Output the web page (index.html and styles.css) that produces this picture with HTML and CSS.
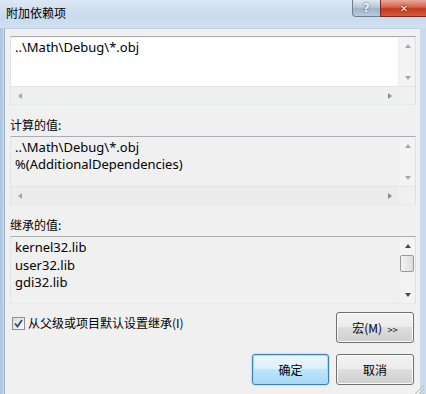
FILE: index.html
```html
<!DOCTYPE html>
<html lang="zh">
<head>
    <meta charset="UTF-8">
    <title>附加依赖项</title>
    <link rel="stylesheet" href="styles.css">
</head>
<body>
<div class="window">
    <div class="titlebar">
        <span class="title">附加依赖项</span>
        <div class="caption">
            <span class="cap-btn help">?</span>
            <span class="cap-btn close">&#x2715;</span>
        </div>
    </div>
    <div class="client">
        <!-- redigerbar liste -->
        <div class="listbox edit">
            <div class="list-main">
                <div class="list-text">..\Math\Debug\*.obj</div>
                <div class="vscroll">
                    <span class="sb-btn"><i class="arr up"></i></span>
                    <span class="sb-track"></span>
                    <span class="sb-btn"><i class="arr down"></i></span>
                </div>
            </div>
            <div class="hscroll">
                <span class="sb-btn"><i class="arr left"></i></span>
                <span class="sb-track"></span>
                <span class="sb-btn"><i class="arr right"></i></span>
                <span class="corner"></span>
            </div>
        </div>

        <div class="label">计算的值:</div>
        <div class="listbox">
            <div class="list-main">
                <div class="list-text">..\Math\Debug\*.obj<br>%(AdditionalDependencies)</div>
                <div class="vscroll">
                    <span class="sb-btn"><i class="arr up"></i></span>
                    <span class="sb-track"></span>
                    <span class="sb-btn"><i class="arr down"></i></span>
                </div>
            </div>
            <div class="hscroll">
                <span class="sb-btn"><i class="arr left"></i></span>
                <span class="sb-track"></span>
                <span class="sb-btn"><i class="arr right"></i></span>
                <span class="corner"></span>
            </div>
        </div>

        <div class="label">继承的值:</div>
        <div class="listbox tall">
            <div class="list-main">
                <div class="list-text">kernel32.lib<br>user32.lib<br>gdi32.lib</div>
                <div class="vscroll active">
                    <span class="sb-btn"><i class="arr up"></i></span>
                    <span class="thumb"></span>
                    <span class="sb-track"></span>
                    <span class="sb-btn"><i class="arr down"></i></span>
                </div>
            </div>
        </div>

        <div class="check-row">
            <label class="check">
                <span class="box">
                    <svg width="9" height="9" viewBox="0 0 9 9"><path d="M1 4.5 L3.5 7.5 L8 1" fill="none" stroke="#2c4a82" stroke-width="1.8"/></svg>
                </span>
                从父级或项目默认设置继承(I)
            </label>
            <button class="btn">宏(M) <small>&gt;&gt;</small></button>
        </div>
        <div class="btn-row">
            <button class="btn default">确定</button>
            <button class="btn">取消</button>
        </div>
        <span class="grip"></span>
    </div>
</div>
</body>
</html>
```
FILE: styles.css
```css
body{
    margin: 0;
    font-family: "Noto Sans", "Noto Sans CJK SC", sans-serif;
    font-size: 12px;
    color: #000;
    background: #c9dbee;
}
.window{
    width: 426px;
    height: 394px;
    display: flex;
    flex-direction: column;
    overflow: hidden;
    background: linear-gradient(90deg, #a9c2de 0, #c6d9ee 4px, #d4e3f3 60%, #c8dbef 100%);
}
.titlebar{
    height: 28px;
    display: flex;
    justify-content: space-between;
    align-items: flex-start;
    background: linear-gradient(180deg, #dbe7f4 0, #c9dbee 60%, #d0e0f1 100%);
}
.title{
    font-family: "Noto Sans CJK SC", sans-serif;
    margin: 4px 0 0 6px;
    line-height: 17px;
}
.caption{
    display: flex;
    margin-right: -2px;
}
.cap-btn{
    height: 17px;
    display: flex;
    align-items: center;
    justify-content: center;
    font-family: "DejaVu Sans", sans-serif;
    font-weight: bold;
    color: #fff;
    border: 1px solid #6d7e92;
    border-top: none;
    box-sizing: border-box;
}
.help{
    width: 28px;
    border-radius: 0 0 0 4px;
    border-right: none;
    font-size: 12px;
    color: #eef3f8;
    text-shadow: 0 0 2px #38506a;
    background: linear-gradient(180deg, #dfe8f1 0, #b7c8da 45%, #9fb3c8 55%, #b9cbdd 100%);
}
.close{
    width: 48px;
    font-size: 10px;
    text-shadow: 0 0 2px #5a1208, 0 0 1px #5a1208;
    border-color: #7a2a20;
    background: linear-gradient(180deg, #e9a99b 0, #d2624b 45%, #c3361d 55%, #d55a3e 100%);
}
.client{
    flex: 1;
    position: relative;
    margin: 0 6px 0 4px;
    padding: 7px 4px 0 5px;
    background: #f0f0f0;
    border-left: 1px solid #9fb3c9;
    border-top: 1px solid #c0d0e2;
    box-sizing: border-box;
}
.listbox{
    height: 69px;
    box-sizing: border-box;
    display: flex;
    flex-direction: column;
    border: 1px solid;
    border-color: #abadb3 #dbdfe6 #e3e9ef #e2e3ea;
    background: #f0f0f0;
}
.listbox.edit{
    background: #fff;
    box-shadow: inset 0 1px 0 #fcf3e6;
}
.listbox.tall{
    height: 68px;
}
.list-main{
    flex: 1;
    display: flex;
    min-height: 0;
}
.list-text{
    flex: 1;
    padding: 2px 4px;
    font-size: 13px;
    line-height: 16.5px;
    white-space: nowrap;
}
.tall .list-text{
    line-height: 17.5px;
}
.vscroll{
    width: 17px;
    display: flex;
    flex-direction: column;
    background: #f3f3f3;
    border-left: 1px solid #ececec;
    box-sizing: border-box;
}
.hscroll{
    height: 17px;
    display: flex;
    background: #ececec;
    border-top: 1px solid #e4e4e4;
}
.edit .hscroll{
    background: #efefef;
}
.sb-btn{
    width: 17px;
    height: 17px;
    flex: none;
    display: flex;
    align-items: center;
    justify-content: center;
}
.sb-track{
    flex: 1;
}
.corner{
    width: 17px;
    background: #f0f0f0;
}
.arr{
    width: 0;
    height: 0;
    border: 3.5px solid transparent;
}
.arr.up{ border-bottom: 4px solid #a8a8a8; border-top: 0; }
.arr.down{ border-top: 4px solid #a8a8a8; border-bottom: 0; }
.arr.left{ border-right: 4px solid #a8a8a8; border-left: 0; }
.arr.right{ border-left: 4px solid #8c8c8c; border-right: 0; }
.active .arr.up{ border-bottom-color: #4a4a4a; }
.active .arr.down{ border-top-color: #4a4a4a; }
.thumb{
    height: 15px;
    margin: 1px 1px 0 1px;
    border: 1px solid #9a9a9a;
    border-radius: 2px;
    background: linear-gradient(90deg, #f4f4f4, #dcdcdc);
}
.label{
    padding: 11px 0 3px 0;
    line-height: 17px;
    font-family: "Noto Sans CJK SC", sans-serif;
}
.check-row{
    display: flex;
    justify-content: space-between;
    align-items: flex-start;
    margin: 8px 2px 0 2px;
}
.check{
    display: flex;
    align-items: center;
    gap: 3px;
    margin-top: 4px;
    font-family: "Noto Sans CJK SC", sans-serif;
    line-height: 14px;
}
.box{
    width: 13px;
    height: 13px;
    box-sizing: border-box;
    border: 1px solid #8e8f8f;
    background: linear-gradient(135deg, #dcdcdc, #fafafa);
    display: flex;
    align-items: center;
    justify-content: center;
}
.btn{
    width: 78px;
    height: 31px;
    font-family: "Noto Sans CJK SC", sans-serif;
    font-size: 12px;
    color: #000;
    border: 1px solid #707070;
    border-radius: 3px;
    background: linear-gradient(180deg, #f2f2f2 0, #ebebeb 49%, #dddddd 50%, #cfcfcf 100%);
    box-shadow: inset 0 0 0 1px #fbfbfb;
    padding: 0;
}
.btn small{
    font-size: 9px;
    margin-left: 3px;
}
.btn-row{
    display: flex;
    justify-content: flex-end;
    gap: 7px;
    margin: 11px 2px 0 0;
}
.btn.default{
    width: 77px;
    border-color: #3c7fb1;
    background: linear-gradient(180deg, #eaf6fd 0, #d9f0fc 49%, #bee6fd 50%, #a7d9f5 100%);
    box-shadow: inset 0 0 0 1px #9fe0fb, 0 0 2px #7cc4ec;
}
.grip{
    position: absolute;
    right: -4px;
    bottom: 0;
    width: 11px;
    height: 10px;
    background: repeating-linear-gradient(135deg, transparent 0 2px, #b5b5b5 2px 3px);
    clip-path: polygon(100% 0, 100% 100%, 0 100%);
}
```
